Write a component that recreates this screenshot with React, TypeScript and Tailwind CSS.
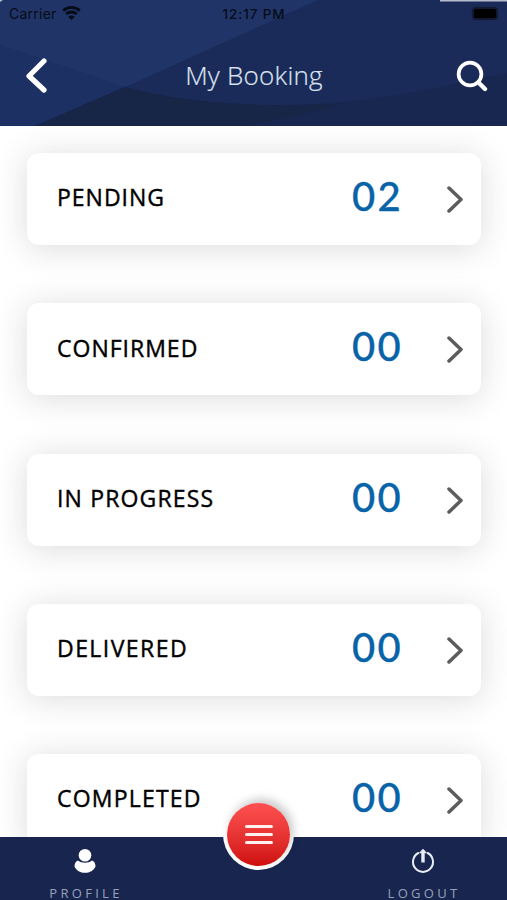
import React from 'react'

type Booking = {
    label: string;
    count: string;
    spacing: string;
};

type NavItemProps = {
    label: string;
    icon: React.JSX.Element;
};

const bookings: Booking[] = [
    { label: 'PENDING', count: '02', spacing: 'tracking-[1px]' },
    { label: 'CONFIRMED', count: '00', spacing: 'tracking-[1px]' },
    { label: 'IN PROGRESS', count: '00', spacing: 'tracking-[1.15px]' },
    { label: 'DELIVERED', count: '00', spacing: 'tracking-[1.45px]' },
    { label: 'COMPLETED', count: '00', spacing: 'tracking-[1.2px]' },
];

const HeaderPattern = () => (
    <svg className="absolute inset-0 h-full w-full" viewBox="0 0 507 126" preserveAspectRatio="none">
        <rect width="507" height="126" fill="#1a2b59" />
        <path d="M0 0H318L125 87L0 45Z" fill="#203468" />
        <path d="M0 45L125 87L35 126H0Z" fill="#1d3063" />
        <path d="M35 126L125 87C205 109 320 113 440 87Q475 79 507 73V126Z" fill="#182750" />
        <path d="M35 126L125 87C190 105 275 108 345 103Q300 116 245 126Z" fill="#172547" />
        <path d="M440 0H507V1.5H440Z" fill="#b4bccb" />
        <path d="M0 0H3L0 2Z" fill="#b4bccb" />
    </svg>
)

const StatusBar = () => (
    <div className="relative flex h-7 items-center justify-between pl-[9px] pr-[11px] font-['Inter',sans-serif] text-[14px] text-[#070b16]">
        <div className="flex w-[120px] items-center gap-[5px]">
            <span className="pb-px tracking-[0.25px]">Carrier</span>
            <svg className="mb-px" width="19" height="15" viewBox="0 0 19 15" fill="none" stroke="#070b16" strokeWidth="2.8">
                <path d="M1.2 4.6C5.8 .4 13.2 .4 17.8 4.6" />
                <path d="M4.2 8.1C7.2 5.3 11.8 5.3 14.8 8.1" />
                <path d="M9.5 14L6.2 10.8C8.2 9.1 10.8 9.1 12.8 10.8Z" fill="#070b16" stroke="none" />
            </svg>
        </div>
        <span className="ml-[3px] text-[13.5px] font-medium tracking-[0.9px]">12:17 PM</span>
        <div className="flex w-[120px] justify-end">
            <div className="mb-[2px] h-[9px] w-[22px] rounded-[2px] bg-black shadow-[0_0_1px_2px_#11182f]" />
        </div>
    </div>
)

const Header = () => (
    <header className="relative h-[126px] shrink-0">
        <HeaderPattern />
        <StatusBar />
        <div className="relative flex h-24 items-center justify-between pl-[26px] pr-[19px]">
            <button aria-label="Back" className="w-8">
                <svg width="22" height="36" viewBox="0 0 22 36" fill="none" stroke="white" strokeWidth="5.2" strokeLinecap="round" strokeLinejoin="round">
                    <path d="M18 3L3 18L18 32" />
                </svg>
            </button>
            <h1 className="mr-[6px] pb-[2px] text-[26px] font-light tracking-[0.25px] text-[#dce3f1] [-webkit-text-stroke:0.2px_#dce3f1]">My Booking</h1>
            <button aria-label="Search" className="flex w-8 justify-end">
                <svg width="32" height="32" viewBox="0 0 32 32" fill="none" stroke="white" strokeWidth="3.7" strokeLinecap="round">
                    <circle cx="14" cy="14" r="11.4" />
                    <path d="M22.5 22.5L29 29" strokeWidth="4.4" />
                </svg>
            </button>
        </div>
    </header>
)

const BookingCard = ({ label, count, spacing }: Booking) => (
    <div className="flex h-[92px] shrink-0 items-center rounded-[12px] bg-white pl-[30px] pr-[17px] shadow-[0_3px_32px_rgba(40,40,50,0.17)]">
        <span className={`flex-1 pb-[3px] text-[23px] text-black [-webkit-text-stroke:0.4px_black] ${spacing}`}>{label}</span>
        <span className="w-[67px] pb-[6px] font-['Lato',sans-serif] text-[40px] font-medium leading-none tracking-[2.2px] text-[#0863a8] [-webkit-text-stroke:0.3px_#0863a8]">{count}</span>
        <svg className="ml-[27px]" width="18" height="28" viewBox="0 0 18 28" fill="none" stroke="#5c5c5c" strokeWidth="3.5" strokeLinecap="round" strokeLinejoin="round">
            <path d="M3 3L15 14.5L3 26" />
        </svg>
    </div>
)

const NavItem = ({ label, icon }: NavItemProps) => (
    <button className="flex w-[169px] flex-col items-center justify-start pt-[11px]">
        {icon}
        <span className="mt-3 pl-[3px] text-[13px] leading-[14px] tracking-[3.3px] text-[#98a1b9]">{label}</span>
    </button>
)

const BottomNav = () => (
    <nav className="relative flex h-[63px] shrink-0 justify-between bg-[#18254f]">
        <NavItem
            label="PROFILE"
            icon={
                <svg className="shrink-0" width="24" height="26" viewBox="0 0 24 26" fill="white">
                    <circle cx="12" cy="7.2" r="6.3" />
                    <path d="M5 12.6C8.5 15.6 15.5 15.6 19 12.6C21 13 22.5 15.6 22.5 18.5C20.5 22.5 17 24.8 12 24.8S3.5 22.5 1.5 18.5C1.5 15.6 3 13 5 12.6Z" />
                </svg>
            }
        />
        {/* menu button overlaps the top edge of the bar */}
        <button
            aria-label="Menu"
            className="absolute left-[223px] top-[-38px] flex h-[71px] w-[71px] flex-col items-center justify-center gap-[5px] rounded-full bg-white"
        >
            <span className="absolute inset-1 rounded-full bg-linear-to-b from-[#ff5051] to-[#cf0c0c] shadow-[3px_-4px_10px_rgba(0,0,0,0.22)]" />
            <span className="relative h-[3px] w-7 rounded-full bg-[#fff0f0]" />
            <span className="relative h-[3px] w-7 rounded-full bg-[#fff0f0]" />
            <span className="relative h-[3px] w-7 rounded-full bg-[#fff0f0]" />
        </button>
        <NavItem
            label="LOGOUT"
            icon={
                <svg className="shrink-0" width="24" height="26" viewBox="0 0 24 26" fill="none" stroke="#e9edf6" strokeWidth="2" strokeLinecap="round">
                    <path d="M7.4 5A10 10 0 1 0 16.6 5" />
                    <path d="M12 3.5V14.5" strokeWidth="3.4" strokeLinecap="butt" />
                    <path d="M9 4.5L12 1.2L15 4.5Z" fill="#e9edf6" strokeWidth="1" />
                </svg>
            }
        />
    </nav>
)

const App = () => {
    return (
        <div className="flex h-[900px] w-[507px] flex-col overflow-hidden bg-white font-['Open_Sans','Noto_Sans',sans-serif]">
            <Header />
            <main className="flex min-h-0 flex-1 flex-col gap-[58.3px] overflow-hidden pl-[27px] pr-[26px] pt-[27px]">
                {bookings.map((booking) => (
                    <BookingCard key={booking.label} {...booking} />
                ))}
            </main>
            <BottomNav />
        </div>
    )
}

export default App
